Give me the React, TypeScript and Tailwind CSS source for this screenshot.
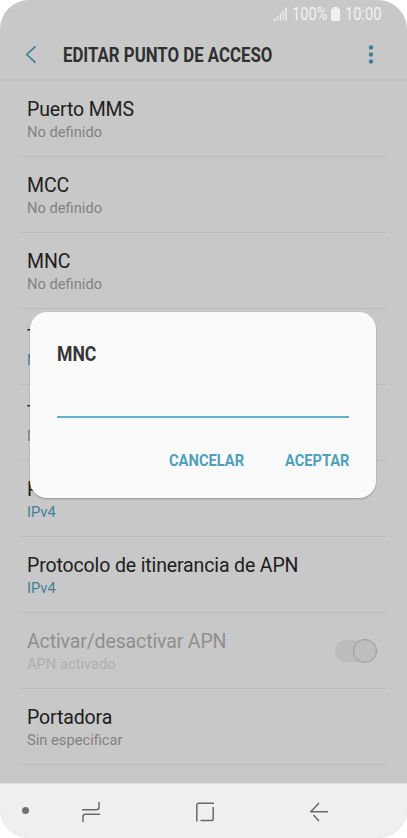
import React from 'react';

interface Setting {
  title: string;
  value: string;
  tone?: 'accent' | 'disabled';
  toggle?: boolean;
}

const settings: Setting[] = [
  { title: 'Puerto MMS', value: 'No definido' },
  { title: 'MCC', value: 'No definido' },
  { title: 'MNC', value: 'No definido' },
  { title: 'Tipo de autenticación', value: 'Ninguno', tone: 'accent' },
  { title: 'Tipo de APN', value: 'No definido' },
  { title: 'Protocolo de APN', value: 'IPv4', tone: 'accent' },
  { title: 'Protocolo de itinerancia de APN', value: 'IPv4', tone: 'accent' },
  { title: 'Activar/desactivar APN', value: 'APN activado', tone: 'disabled', toggle: true },
  { title: 'Portadora', value: 'Sin especificar' },
];

const valueColor = {
  normal: 'text-[#828282]',
  accent: 'text-[#427f98]',
  disabled: 'text-[#b0b0b0]',
};

const StatusBar = () => (
  <div className="flex h-7 items-center justify-end pr-[25px] text-[#f1f1f1]">
    <svg className="mr-[5px] h-[14px] w-[14px]" viewBox="0 0 14 14" fill="currentColor">
      <path d="M0 13.5 2.8 10.7V13.5ZM4 9.7 5.2 8.5V13.5H4ZM6.8 7 8 5.8V13.5H6.8ZM9.5 4.3 10.7 3.1V13.5H9.5ZM12.2 1.6 13.7.1V13.5H12.2Z" />
    </svg>
    <span className="w-[39px] text-[17.5px] leading-7">
      <span className="inline-block origin-left scale-x-[.84]">100%</span>
    </span>
    <svg className="mr-[5px] h-[14px] w-[9px] shrink-0" viewBox="0 0 9 14" fill="currentColor">
      <path d="M2.5 0h4v1.5H8a1 1 0 0 1 1 1V13a1 1 0 0 1-1 1H1a1 1 0 0 1-1-1V2.5a1 1 0 0 1 1-1h1.5z" />
    </svg>
    <span className="w-[37px] text-[17.5px] leading-7">
      <span className="inline-block origin-left scale-x-[.84]">10:00</span>
    </span>
  </div>
);

const Header = () => (
  <header className="flex h-[53px] items-center border-b-2 border-[#c0c0c0] pt-[2px] pr-[32px] pl-[25px]">
    <svg className="h-[18px] w-[12px]" viewBox="0 0 12 18" fill="none" stroke="#427f98" strokeWidth="1.7">
      <path d="M10.5 .3 1.8 8.5 10.5 16.7" />
    </svg>
    <h1 className="ml-[26px] flex-1 whitespace-nowrap text-xl font-bold text-[#303030]">
      <span className="inline-block origin-left scale-x-[.84]">EDITAR PUNTO DE ACCESO</span>
    </h1>
    <svg className="h-[20px] w-[8px]" viewBox="0 0 8 20" fill="#427f98">
      <circle cx="4" cy="2.5" r="2.2" />
      <circle cx="4" cy="9.5" r="2.2" />
      <circle cx="4" cy="16.5" r="2.2" />
    </svg>
  </header>
);

const SettingRow = ({ title, value, tone, toggle }: Setting) => (
  <li className="mr-[21px] ml-5 flex h-[76px] items-center justify-between border-b border-[#bcbcbc] pr-[9px] pl-[7px]">
    <div className="pt-[3px] whitespace-nowrap">
      <div
        className={`text-[19.5px] leading-[23px] tracking-[-0.13px] ${
          tone === 'disabled' ? 'text-[#8f8f8f]' : 'text-[#202020]'
        }`}
      >
        {title}
      </div>
      <div className={`text-[14.7px] leading-[22px] ${valueColor[tone ?? 'normal']}`}>{value}</div>
    </div>
    {toggle && (
      <div className="flex h-[22px] w-[42px] items-center justify-end rounded-full bg-[#bcbcbc]">
        <div className="h-[24px] w-[24px] shrink-0 rounded-full border border-[#9d9d9d] bg-[#bebebe]" />
      </div>
    )}
  </li>
);

const MncDialog = () => (
  <div className="absolute top-[312px] left-[30px] flex h-[186px] w-[346px] flex-col rounded-[17px] bg-[#fafafa] px-[27px] shadow-[0_1px_2px_rgba(0,0,0,0.25)]">
    <h2 className="mt-[30px] text-xl leading-6 font-bold text-[#363636]">
      <span className="inline-block origin-left scale-x-[.88]">MNC</span>
    </h2>
    <div className="mt-[37px] h-[15px] border-b-2 border-[#62b0ce]" />
    <div className="mt-[30px] flex justify-end text-[17px] leading-6 font-bold text-[#4f9fbd]">
      <button className="w-[116px] text-left">
        <span className="inline-block origin-left scale-x-[.865]">CANCELAR</span>
      </button>
      <button className="w-[64px] text-left">
        <span className="inline-block origin-left scale-x-[.86]">ACEPTAR</span>
      </button>
    </div>
  </div>
);

const NavigationBar = () => (
  <nav className="flex h-[55px] items-center border-t border-[#dcdcdc] bg-[#efefef] pb-px pl-[22px] text-[#6a6a6a]">
    <div className="h-[7px] w-[7px] rounded-full bg-[#707070]" />
    <svg className="mt-[3px] ml-[53px] h-[20px] w-[18px]" viewBox="0 0 18 20" fill="none" stroke="currentColor" strokeWidth="1.5">
      <path d="M0 7.8H14.5Q17 7.8 17 5.3V0" />
      <path d="M18 12.2H3.5Q1 12.2 1 14.7V20" />
    </svg>
    <svg className="mt-[3px] ml-[96px] h-[20px] w-[18px]" viewBox="0 0 18 20" fill="none" stroke="currentColor" strokeWidth="1.5">
      <path d="M.8 19.5V3Q.8 1.2 2.6 1.2H18" />
      <path d="M17.2 5V16.7Q17.2 18.5 15.4 18.5H4.5" />
    </svg>
    <svg className="mt-[3px] ml-[96px] h-[20px] w-[18px]" viewBox="0 0 18 20" fill="none" stroke="currentColor" strokeWidth="1.5">
      <path d="M9 1 .8 9.8H18" />
      <path d="M3.5 13 9 19" />
    </svg>
  </nav>
);

const App: React.FC = () => {
  return (
    <div className="h-[838px] w-[407px] bg-white font-['Roboto',sans-serif]">
      <div className="relative flex h-full flex-col overflow-hidden rounded-[29px] bg-[#c8c8c8]">
        <StatusBar />
        <Header />
        <ul className="flex-1">
          {settings.map((setting) => (
            <SettingRow key={setting.title} {...setting} />
          ))}
        </ul>
        <NavigationBar />
        <MncDialog />
      </div>
    </div>
  );
};

export default App;
